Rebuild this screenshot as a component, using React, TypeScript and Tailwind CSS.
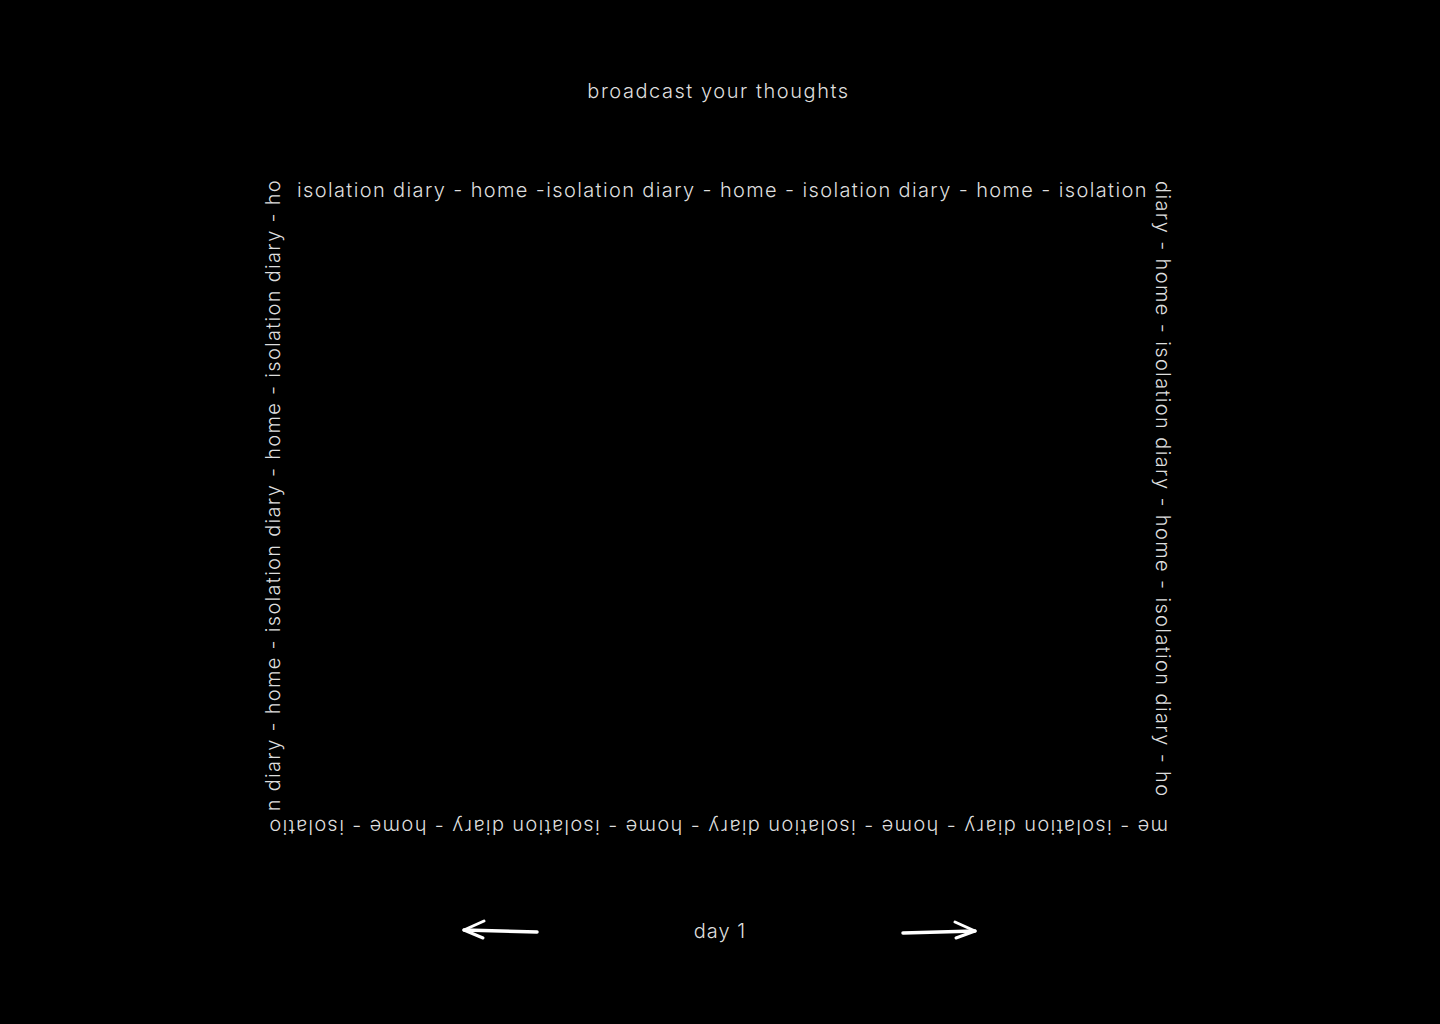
export default function App() {
  return (
    <div className="min-h-[1024px] w-full bg-black text-[#dedede] font-['Inter',sans-serif] flex flex-col items-center">
      <h1 className="mt-[78px] mr-[3px] text-[20px] leading-[26px] font-light tracking-[1.55px]">broadcast your thoughts</h1>

      <div className="mt-[75px] mr-[7px] w-[909px] flex flex-col">
        <div className="flex h-[637px]">
          <div className="w-[22px] flex justify-center">
            <span className="[writing-mode:vertical-rl] rotate-180 text-[20px] leading-[22px] font-light tracking-[1.3px] whitespace-nowrap self-start">
              n diary - home - isolation diary - home - isolation diary - ho
            </span>
          </div>
          <div className="flex-1 pl-[13px]">
            <p className="text-[20px] leading-[22px] font-light tracking-[1.37px] whitespace-nowrap">
              isolation diary - home -isolation diary - home - isolation diary - home - isolation
            </p>
          </div>
          <div className="w-[22px] flex justify-start pl-[3px] pt-[2px]">
            <span className="[writing-mode:vertical-rl] text-[20px] leading-[22px] font-light tracking-[1.37px] whitespace-nowrap self-start">
              diary - home - isolation diary - home - isolation diary - ho
            </span>
          </div>
        </div>
        <div className="flex justify-end pr-[3px]">
          <p className="rotate-180 text-[20px] leading-[22px] font-light tracking-[1.36px] whitespace-nowrap">
            me - isolation diary - home - isolation diary - home - isolation diary - home - isolatio
          </p>
        </div>
      </div>

      <div className="mt-[80px] w-[516px] flex items-center justify-between">
        <svg width="78" height="24" viewBox="0 0 78 24" fill="none" className="shrink-0">
          <path d="M2 11 L75 13" stroke="white" strokeWidth="3.5" strokeLinecap="round" />
          <path d="M2 11 L22 2 M2 11 L21 19" stroke="white" strokeWidth="3" strokeLinecap="round" />
        </svg>
        <span className="text-[20px] leading-[26px] font-light tracking-[1px]">day 1</span>
        <svg width="78" height="24" viewBox="0 0 78 24" fill="none" className="shrink-0">
          <path d="M3 14 L75 12" stroke="white" strokeWidth="3.5" strokeLinecap="round" />
          <path d="M75 12 L55 3 M75 12 L56 19" stroke="white" strokeWidth="3" strokeLinecap="round" />
        </svg>
      </div>
    </div>
  );
}
